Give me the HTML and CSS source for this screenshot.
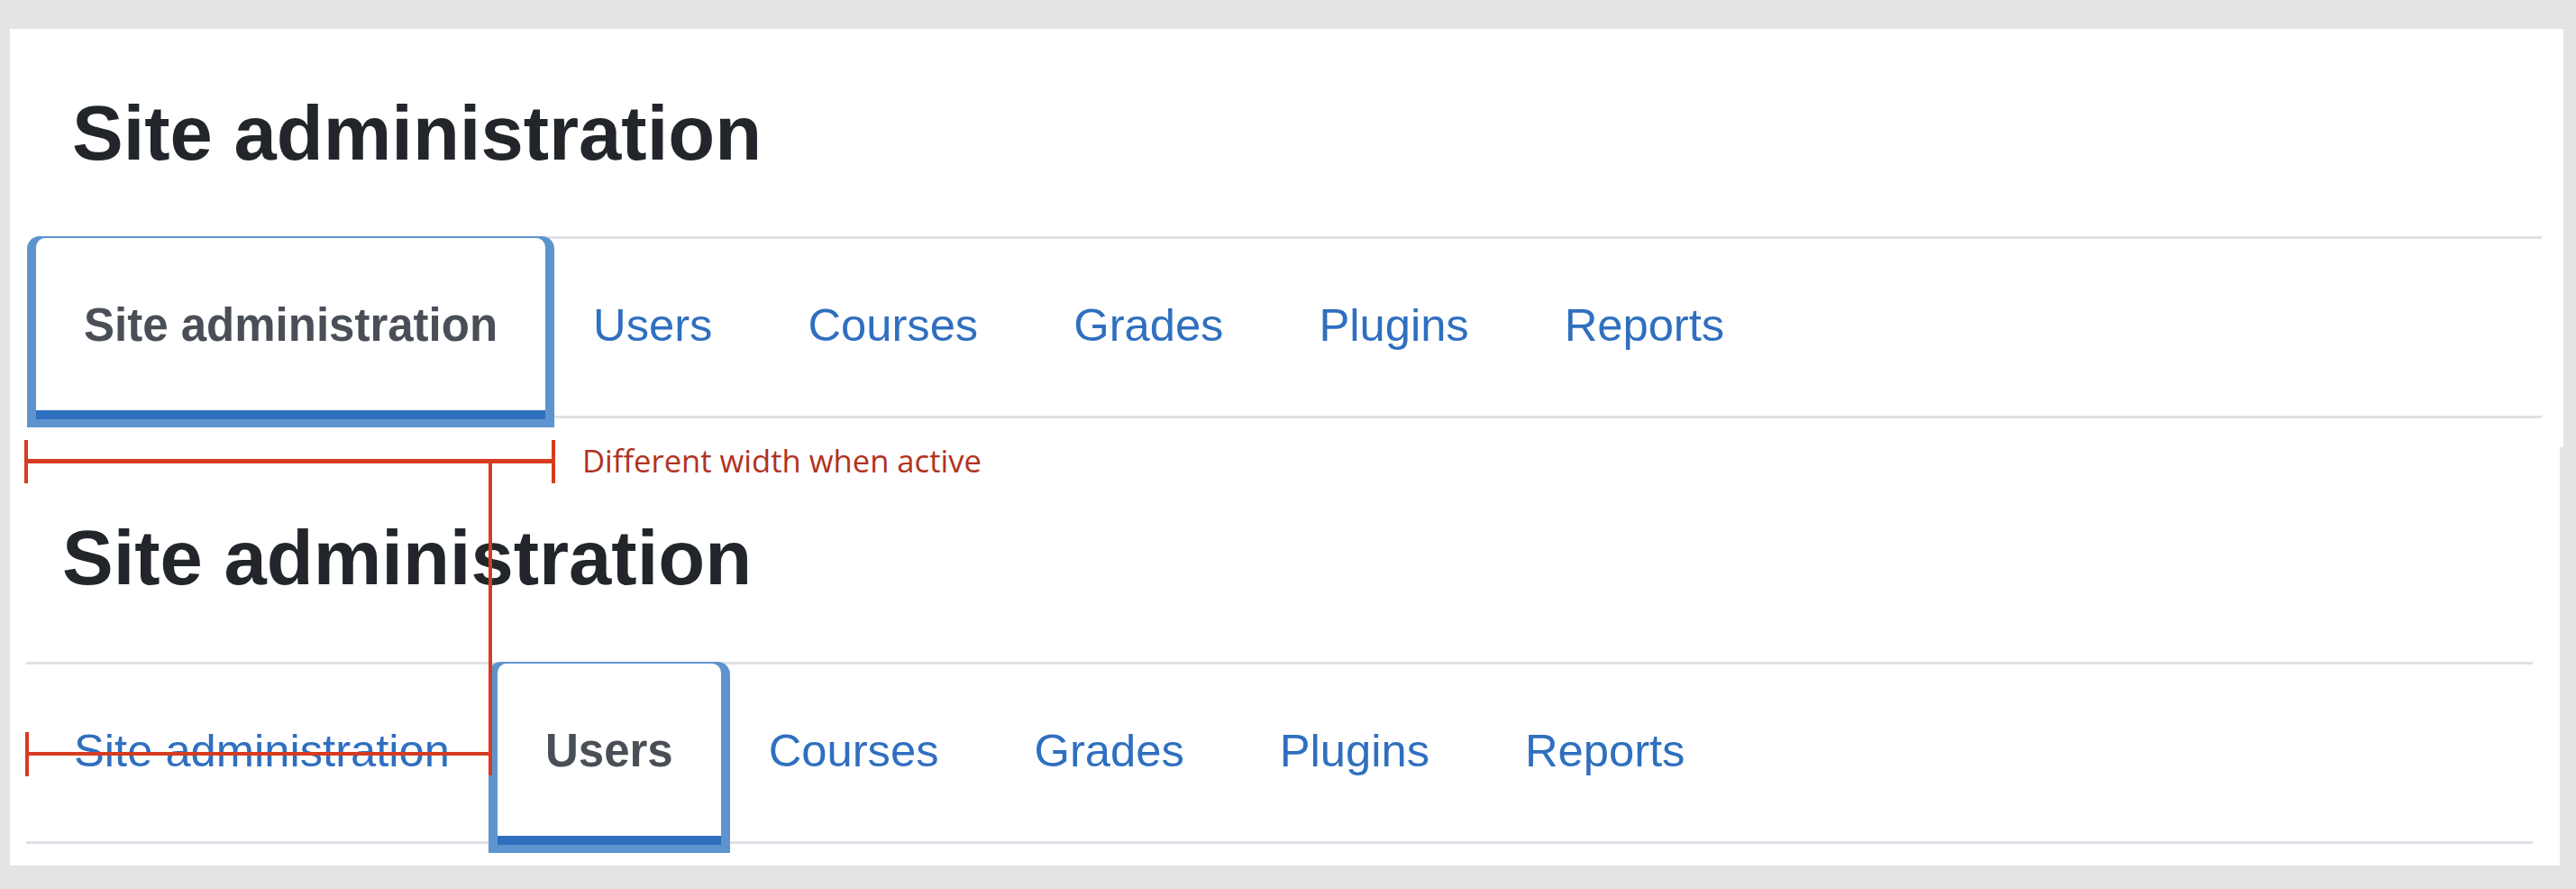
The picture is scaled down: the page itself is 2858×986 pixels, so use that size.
FILE: index.html
```html
<!DOCTYPE html>
<html lang="en">
<head>
<meta charset="utf-8">
<title>Site administration tabs</title>
<link rel="stylesheet" href="styles.css">
</head>
<body>
  <section class="shot shot-top">
    <h1 class="page-title">Site administration</h1>
    <nav class="tabs">
      <div class="tab-active"><a class="tab-link is-active" href="#">Site administration</a></div>
      <a class="tab-link" href="#">Users</a>
      <a class="tab-link" href="#">Courses</a>
      <a class="tab-link" href="#">Grades</a>
      <a class="tab-link" href="#">Plugins</a>
      <a class="tab-link" href="#">Reports</a>
    </nav>
  </section>
  <section class="shot shot-bottom">
    <h1 class="page-title">Site administration</h1>
    <nav class="tabs">
      <a class="tab-link" href="#">Site administration</a>
      <div class="tab-active"><a class="tab-link is-active" href="#">Users</a></div>
      <a class="tab-link" href="#">Courses</a>
      <a class="tab-link" href="#">Grades</a>
      <a class="tab-link" href="#">Plugins</a>
      <a class="tab-link" href="#">Reports</a>
    </nav>
  </section>

  <svg class="annot-lines" width="2858" height="986" viewBox="0 0 2858 986" aria-hidden="true">
    <rect x="28" y="509" width="588" height="5" fill="#d63c21"/>
    <rect x="27" y="488" width="4" height="48" fill="#d63c21"/>
    <rect x="612" y="488" width="4" height="48" fill="#d63c21"/>
    <rect x="542" y="511" width="4" height="349" fill="#d63c21"/>
    <rect x="29" y="834" width="515" height="4" fill="#d63c21"/>
    <rect x="28" y="812" width="4" height="49" fill="#d63c21"/>
  </svg>
  <div class="annot-text">Different width when active</div>
</body>
</html>
```
FILE: styles.css
```css
html, body {
  margin: 0;
  padding: 0;
}
body {
  background: #e4e4e4;
  width: 2858px;
  height: 986px;
  padding-top: 32px;
  box-sizing: border-box;
  overflow: hidden;
  font-family: "Liberation Sans", Arial, sans-serif;
}
.shot {
  background: #ffffff;
  margin-left: 11px;
  box-sizing: border-box;
  height: 464px;
}
.shot-top {
  width: 2833px;
  padding: 73px 24px 0 29px;
}
.shot-bottom {
  width: 2829px;
  padding: 80px 30px 0 18px;
}
.page-title {
  margin: 0;
  padding-left: 40px;
  font-size: 85px;
  line-height: 85px;
  font-weight: 700;
  color: #22262b;
}
.shot-top .page-title { margin-bottom: 72px; }
.shot-bottom .page-title { margin-bottom: 73px; }

.tabs {
  display: flex;
  align-items: stretch;
  height: 196px;
  border-top: 3px solid #dee2e6;
  border-bottom: 3px solid #dee2e6;
}
.tab-link {
  display: block;
  padding: 70px 53px 0;
  font-size: 50.7px;
  line-height: 51px;
  color: #2f6fbf;
  text-decoration: none;
  white-space: nowrap;
}
.tab-active {
  display: flex;
  margin: -3px -10px -13px -10px;
  padding: 2px 10px 9px;
  background: #5e94ce;
  border-radius: 14px 14px 0 0;
}
.tab-link.is-active {
  flex: 1;
  background: #ffffff;
  color: #4a4f57;
  font-size: 51px;
  font-weight: 700;
  padding-top: 71px;
  border-bottom: 10px solid #2f6fbf;
  border-radius: 10px 10px 0 0;
}

.annot-lines {
  position: absolute;
  left: 0;
  top: 0;
  pointer-events: none;
}
.annot-text {
  position: absolute;
  left: 646px;
  top: 494px;
  font-family: "Open Sans", "Noto Sans", sans-serif;
  font-size: 34.6px;
  line-height: 34px;
  color: #b23220;
  white-space: nowrap;
}
```
